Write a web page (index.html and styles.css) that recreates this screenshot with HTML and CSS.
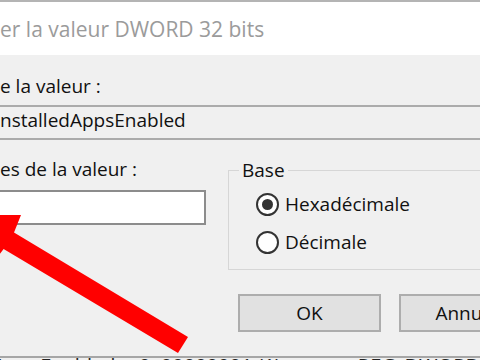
FILE: index.html
```html
<!DOCTYPE html>
<html lang="fr">
<head>
    <meta charset="UTF-8">
    <meta name="viewport" content="width=device-width, initial-scale=1.0">
    <title>Modifier la valeur DWORD 32 bits</title>
    <link rel="stylesheet" href="styles.css">
</head>
<body>
    <div class="titlebar">
        <span class="title">er la valeur DWORD 32 bits</span>
    </div>

    <div class="dialog">
        <div class="lbl">e la valeur :</div>
        <div class="field readonly">nstalledAppsEnabled</div>

        <div class="row">
            <div class="col-data">
                <div class="lbl">es de la valeur :</div>
                <div class="field input"></div>
            </div>
            <fieldset class="base">
                <legend>Base</legend>
                <label class="radio"><span class="dot on"></span>Hexadécimale</label>
                <label class="radio"><span class="dot"></span>Décimale</label>
            </fieldset>
        </div>

        <div class="buttons">
            <button class="btn">OK</button>
            <button class="btn">Annuler</button>
        </div>
    </div>

    <!-- ligne de la liste du registre, derrière la boîte -->
    <div class="list-row">
        <span class="c1">nstalledAppsEnabled</span>
        <span class="c2">0x00000001 (1)</span>
        <span class="c3">REG_DWORD</span>
    </div>

    <!-- flèche rouge d'annotation -->
    <svg class="arrow" width="480" height="360" viewBox="0 0 480 360">
        <polygon points="-34,215 21,215 14,232.6 188,337 178,353 3.6,249 -8,264" fill="#ff0000"/>
    </svg>
</body>
</html>
```

FILE: styles.css
```css
/* Boîte de dialogue Windows, vue agrandie */
* { margin: 0; padding: 0; box-sizing: border-box; }
body { width: 480px; height: 360px; overflow: hidden; position: relative; background: #f0f0f0; font-family: "Open Sans", "Noto Sans", sans-serif; font-size: 19px; color: #111; }

.titlebar { height: 55px; background: #fff; border-top: 2px solid #b4b4b4; display: flex; align-items: center; }
.title { font-size: 21px; color: #9b9b9b; line-height: 28px; margin-top: 1px; }

.dialog { height: 303px; padding-top: 18px; border-bottom: 2px solid #a6a6a6; }
.lbl { line-height: 26px; white-space: nowrap; }

.field { white-space: nowrap; }
.readonly { margin-top: 6px; height: 35px; line-height: 27px; padding-bottom: 4px; border-top: 2px solid #ababab; border-bottom: 2px solid #ababab; background: #f0f0f0; }

.row { display: flex; align-items: flex-start; margin-top: 16px; }
.col-data { width: 206px; flex-shrink: 0; }
.input { margin-top: 8px; margin-left: -4px; width: 210px; height: 35px; background: #fff; border: 2px solid #8c8c8c; }

.base { flex: 1; margin-left: 22px; margin-right: -40px; margin-top: 1px; border: 1px solid #d6d6d6; padding: 0 0 8px 10px; }
.base legend { padding: 0 3px; line-height: 26px; }
.radio { display: flex; align-items: center; height: 38px; margin-left: 17px; line-height: 26px; }
.radio:first-of-type { margin-top: 2px; }
.dot { width: 23px; height: 23px; border-radius: 50%; border: 2px solid #333; background: #fff; margin-right: 6px; display: flex; align-items: center; justify-content: center; }
.dot.on::after { content: ""; width: 11px; height: 11px; border-radius: 50%; background: #333; }

.buttons { display: flex; gap: 18px; margin-top: 24px; margin-left: 238px; }
.btn { flex-shrink: 0; width: 143px; height: 38px; background: #e1e1e1; border: 2px solid #adadad; font: inherit; color: #111; line-height: 26px; }

.list-row { display: flex; margin-top: -5px; line-height: 26px; font-size: 20px; color: #222; white-space: nowrap; }
.c1 { margin-left: -80px; width: 250px; }
.c2 { width: 250px; }

.arrow { position: absolute; top: 0; left: 0; pointer-events: none; }
```
